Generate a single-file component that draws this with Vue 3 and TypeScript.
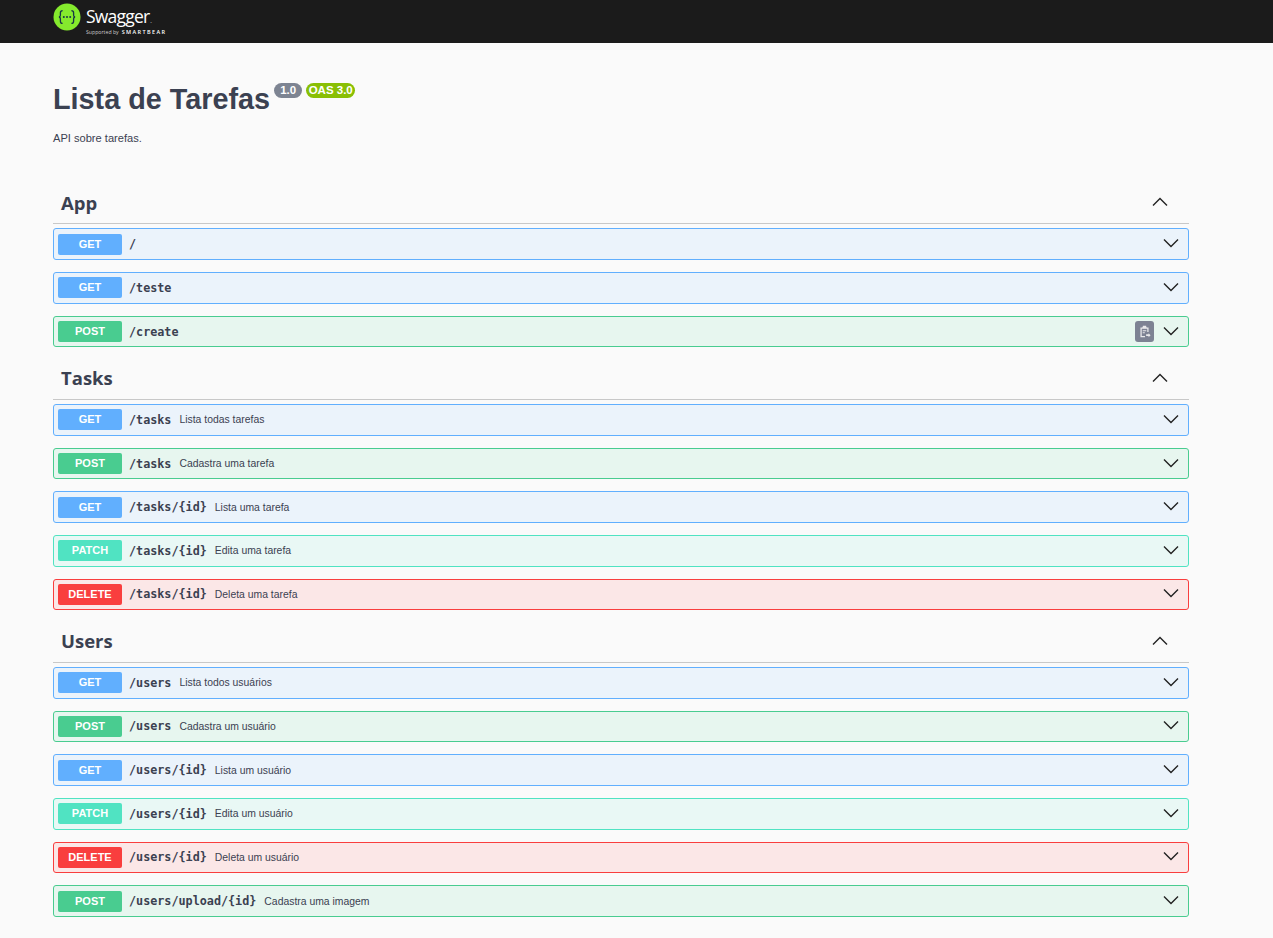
<script setup lang="ts">
type Method = 'get' | 'post' | 'patch' | 'delete'

interface Operation {
  method: Method
  path: string
  summary?: string
  copy?: boolean
}

interface Tag {
  name: string
  operations: Operation[]
}

const tags: Tag[] = [
  {
    name: 'App',
    operations: [
      { method: 'get', path: '/' },
      { method: 'get', path: '/teste' },
      { method: 'post', path: '/create', copy: true },
    ],
  },
  {
    name: 'Tasks',
    operations: [
      { method: 'get', path: '/tasks', summary: 'Lista todas tarefas' },
      { method: 'post', path: '/tasks', summary: 'Cadastra uma tarefa' },
      { method: 'get', path: '/tasks/{id}', summary: 'Lista uma tarefa' },
      { method: 'patch', path: '/tasks/{id}', summary: 'Edita uma tarefa' },
      { method: 'delete', path: '/tasks/{id}', summary: 'Deleta uma tarefa' },
    ],
  },
  {
    name: 'Users',
    operations: [
      { method: 'get', path: '/users', summary: 'Lista todos usuários' },
      { method: 'post', path: '/users', summary: 'Cadastra um usuário' },
      { method: 'get', path: '/users/{id}', summary: 'Lista um usuário' },
      { method: 'patch', path: '/users/{id}', summary: 'Edita um usuário' },
      { method: 'delete', path: '/users/{id}', summary: 'Deleta um usuário' },
      { method: 'post', path: '/users/upload/{id}', summary: 'Cadastra uma imagem' },
    ],
  },
]
</script>

<template>
  <div class="page">
    <header class="topbar">
      <div class="logo">
        <svg class="logo-mark" width="28" height="28" viewBox="0 0 28 28">
          <circle cx="14" cy="14" r="13.5" fill="#85ea2d" />
          <path
            d="M9.6 7.6c-1.6 0-2.2.8-2.2 2.2v2.4c0 1-.5 1.6-1.4 1.8 .9.2 1.4.8 1.4 1.8v2.4c0 1.4.6 2.2 2.2 2.2"
            fill="none"
            stroke="#173647"
            stroke-width="1.3"
          />
          <path
            d="M18.4 7.6c1.6 0 2.2.8 2.2 2.2v2.4c0 1 .5 1.6 1.4 1.8-.9.2-1.4.8-1.4 1.8v2.4c0 1.4-.6 2.2-2.2 2.2"
            fill="none"
            stroke="#173647"
            stroke-width="1.3"
          />
          <circle cx="10.8" cy="14" r="1" fill="#173647" />
          <circle cx="14" cy="14" r="1" fill="#173647" />
          <circle cx="17.2" cy="14" r="1" fill="#173647" />
        </svg>
        <div class="logo-text">
          <span class="logo-name">Swagger<span class="logo-tm">.</span></span>
          <span class="logo-sub">
            <span class="logo-by">Supported by</span>
            <span class="logo-bear">SMARTBEAR</span>
          </span>
        </div>
      </div>
    </header>

    <main class="content">
      <div class="info">
        <div class="title-row">
          <h1 class="title">Lista de Tarefas</h1>
          <span class="badge badge-version">1.0</span>
          <span class="badge badge-oas">OAS 3.0</span>
        </div>
        <p class="description">API sobre tarefas.</p>
      </div>

      <section v-for="tag in tags" :key="tag.name" class="tag">
        <div class="tag-header">
          <h3 class="tag-name">{{ tag.name }}</h3>
          <svg class="arrow" width="20" height="20" viewBox="0 0 20 20">
            <path d="M3 13.5 10 6.5l7 7" fill="none" stroke="#222" stroke-width="1.4" />
          </svg>
        </div>

        <div
          v-for="op in tag.operations"
          :key="op.method + op.path"
          class="op"
          :class="op.method"
        >
          <span class="method">{{ op.method.toUpperCase() }}</span>
          <span class="path">{{ op.path }}</span>
          <span v-if="op.summary" class="summary">{{ op.summary }}</span>
          <span v-if="op.copy" class="copy">
            <svg width="13" height="13" viewBox="0 0 16 16">
              <path
                d="M3 3h2.5V2h5v1H13v5.5h-1.6V4.6H4.6v8.8h4V15H3z"
                fill="#e8e8ea"
              />
              <path d="M6 1h4v3H6zM5.8 6.5h4.4v1.2H5.8zM5.8 9h2.6v1.2H5.8z" fill="#e8e8ea" />
              <path d="M10 11.5h3V10l2.5 2.5L13 15v-1.5h-3z" fill="#e8e8ea" />
            </svg>
          </span>
          <svg class="arrow op-arrow" width="20" height="20" viewBox="0 0 20 20">
            <path d="M3 6.5 10 13.5l7-7" fill="none" stroke="#222" stroke-width="1.4" />
          </svg>
        </div>
      </section>
    </main>
  </div>
</template>

<style>
html,
body {
  margin: 0;
  background: #fafafa;
}
</style>

<style scoped>
.page {
  min-height: 938px;
  background: #fafafa;
  font-family: "Liberation Sans", Arial, sans-serif;
  color: #3b4151;
}

.topbar {
  height: 43px;
  background: #1b1b1b;
  padding-left: 53px;
  box-sizing: border-box;
}

.logo {
  display: flex;
  align-items: flex-start;
  gap: 5px;
  padding-top: 3px;
}

.logo-mark {
  flex: none;
}

.logo-text {
  display: flex;
  flex-direction: column;
  padding-top: 2px;
  color: #fff;
  font-family: "Open Sans", sans-serif;
}

.logo-name {
  font-size: 17.5px;
  font-weight: 400;
  line-height: 22px;
  height: 22px;
  letter-spacing: -0.8px;
}

.logo-tm {
  font-size: 6px;
  margin-left: 1px;
}

.logo-sub {
  display: flex;
  align-items: center;
  gap: 3px;
  height: 10px;
  line-height: 10px;
}

.logo-by {
  font-size: 5.2px;
  color: #ccc;
}

.logo-bear {
  font-size: 5.5px;
  font-weight: 600;
  letter-spacing: 1.4px;
}

.content {
  width: 1136px;
  margin-left: 53px;
}

.info {
  height: 140.8px;
  padding-top: 37px;
  box-sizing: border-box;
}

.title-row {
  display: flex;
  align-items: flex-start;
  height: 38px;
}

.title {
  margin: 0 4px 0 0;
  font-size: 28.8px;
  line-height: 38px;
  font-weight: 700;
  color: #3b4151;
}

.badge {
  margin-top: 3px;
  margin-right: 4px;
  height: 14.5px;
  padding: 0 6px;
  border-radius: 8px;
  font-size: 11.5px;
  line-height: 14.5px;
  font-weight: 700;
  color: #fff;
}

.badge-version {
  background: #7d8492;
}

.badge-oas {
  background: #89bf04;
  margin-right: 0;
  padding: 0 2.5px;
}

.description {
  margin: 13px 0 0;
  font-size: 11.1px;
  line-height: 15px;
}

.tag-header {
  display: flex;
  align-items: center;
  justify-content: space-between;
  height: 40.7px;
  box-sizing: border-box;
  border-bottom: 1px solid #c8c8c8;
  padding: 0 19px 3px 8px;
  margin-bottom: 4px;
}

.tag-name {
  margin: 0;
  font-family: "Open Sans", sans-serif;
  font-size: 18.5px;
  font-weight: 700;
  color: #3b4151;
}

.op {
  display: flex;
  align-items: center;
  height: 31.65px;
  margin-bottom: 12px;
  padding: 0 4px;
  box-sizing: border-box;
  border: 1px solid;
  border-radius: 3px;
}

.method {
  flex: none;
  width: 64px;
  height: 21px;
  border-radius: 2px;
  font-size: 11px;
  font-weight: 700;
  line-height: 21px;
  text-align: center;
  color: #fff;
}

.path {
  margin-left: 7px;
  font-family: "DejaVu Sans Mono", monospace;
  font-size: 11.75px;
  font-weight: 700;
  color: #3b4151;
}

.summary {
  margin-left: 8px;
  font-size: 10.4px;
  color: #3b4151;
}

.copy {
  display: flex;
  align-items: center;
  justify-content: center;
  width: 19px;
  height: 21px;
  margin-left: auto;
  border-radius: 3px;
  background: #7d8293;
}

.op-arrow {
  margin-left: auto;
  margin-right: 3.5px;
  flex: none;
  position: relative;
  top: -1px;
}

.copy + .op-arrow {
  margin-left: 6.5px;
}

.get {
  background: #ebf3fb;
  border-color: #61affe;
}

.get .method {
  background: #61affe;
}

.post {
  background: #e7f6ef;
  border-color: #49cc90;
}

.post .method {
  background: #49cc90;
}

.patch {
  background: #e9f8f5;
  border-color: #50e3c2;
}

.patch .method {
  background: #50e3c2;
}

.delete {
  background: #fbe7e7;
  border-color: #f93e3e;
}

.delete .method {
  background: #f93e3e;
}
</style>
